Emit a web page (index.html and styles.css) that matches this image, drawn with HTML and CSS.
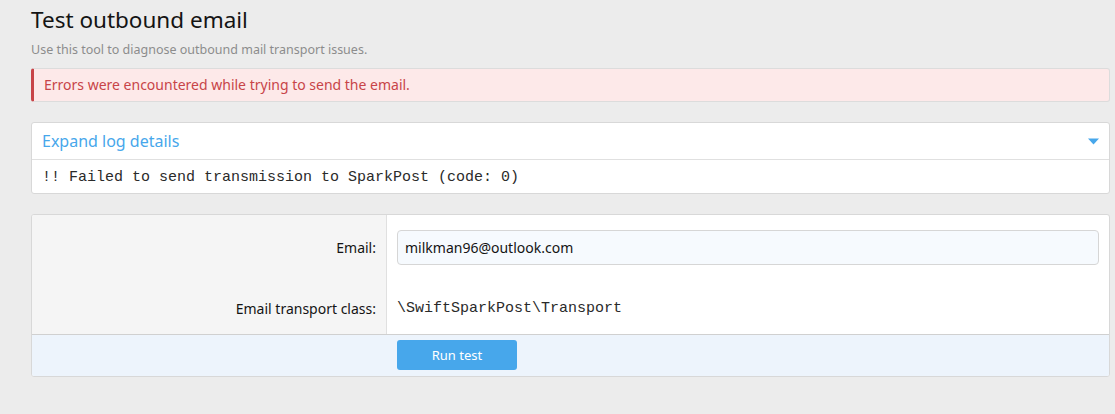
FILE: index.html
```html
<!DOCTYPE html>
<html>
<head>
	<meta charset="UTF-8">
	<title>Test outbound email</title>
	<link rel="stylesheet" href="styles.css">
</head>
<body>
	<div class="page">
		<h1 class="page-title">Test outbound email</h1>
		<p class="page-desc">Use this tool to diagnose outbound mail transport issues.</p>

		<div class="error-box">Errors were encountered while trying to send the email.</div>

		<div class="block log-block">
			<div class="log-head">
				<span class="log-title">Expand log details</span>
				<svg class="caret" width="11" height="7" viewBox="0 0 11 7"><path d="M0 0.5 H11 L5.5 6.5 Z" fill="#47a7eb"/></svg>
			</div>
			<div class="log-body">!! Failed to send transmission to SparkPost (code: 0)</div>
		</div>

		<div class="block form-block">
			<div class="form-row">
				<div class="form-label">Email:</div>
				<div class="form-value">
					<input class="text-input" type="text" value="milkman96@outlook.com">
				</div>
			</div>
			<div class="form-row">
				<div class="form-label row-last">Email transport class:</div>
				<div class="form-value row-last mono">\SwiftSparkPost\Transport</div>
			</div>
			<div class="form-footer">
				<div class="footer-spacer"></div>
				<div class="footer-main">
					<button type="button" class="btn">Run test</button>
				</div>
			</div>
		</div>
	</div>
</body>
</html>
```

FILE: styles.css
```css
html, body{
	margin: 0;
	padding: 0;
	background: #ececec;
	font-family: "Noto Sans", "Open Sans", sans-serif;
	color: #141414;
}
.page{
	padding: 4px 5px 0 31px;
}
.page-title{
	margin: 0;
	font-size: 22.5px;
	font-weight: 400;
	line-height: 32px;
}
.page-desc{
	margin: 5px 0 0 0;
	font-size: 12.5px;
	color: #8c8c8c;
	line-height: 18px;
}
.error-box{
	margin-top: 9px;
	background: #fde9e9;
	border: 1px solid #dcdcdc;
	border-left: 3px solid #c84448;
	border-radius: 3px;
	color: #c84448;
	font-size: 14px;
	padding: 7px 10px;
	line-height: 18px;
}
.block{
	background: #fff;
	border: 1px solid #d8d8d8;
	border-radius: 3px;
}
.log-block{
	margin-top: 20px;
}
.log-head{
	display: flex;
	align-items: center;
	justify-content: space-between;
	padding: 0 10px;
	height: 36px;
	border-bottom: 1px solid #e0e0e0;
}
.log-title{
	color: #47a7eb;
	font-size: 16px;
}
.log-body{
	font-family: "Liberation Mono", monospace;
	font-size: 15px;
	padding: 10px 10px 7px;
	line-height: 16px;
	color: #2a2a2a;
}
.form-block{
	margin-top: 20px;
	overflow: hidden;
}
.form-row{
	display: flex;
}
.form-label{
	width: 344px;
	flex-shrink: 0;
	background: #f5f5f5;
	border-right: 1px solid #e0e0e0;
	text-align: right;
	padding: 24px 10px 0 0;
	font-size: 14px;
	height: 26px;
	line-height: 18px;
}
.form-value{
	flex: 1;
	padding: 15px 10px 0 10px;
	height: 35px;
}
.text-input{
	box-sizing: border-box;
	width: 100%;
	height: 35px;
	border: 1px solid #d6d6d6;
	border-radius: 4px;
	background: #f6fafe;
	font-family: "Noto Sans", "Open Sans", sans-serif;
	font-size: 14px;
	padding: 0 7px;
	color: #141414;
	outline: none;
}
.row-last{
	height: 34px;
	padding-top: 35px;
	line-height: 18px;
}
.mono{
	font-family: "Liberation Mono", monospace;
	font-size: 15px;
	color: #2a2a2a;
}
.form-footer{
	display: flex;
	background: #edf4fc;
	border-top: 1px solid #d0d0d0;
	height: 41px;
}
.footer-spacer{
	width: 355px;
}
.footer-main{
	padding: 5px 10px;
}
.btn{
	width: 120px;
	height: 30px;
	border: none;
	border-radius: 3px;
	background: #47a7eb;
	color: #fff;
	font-family: "Noto Sans", "Open Sans", sans-serif;
	font-size: 13px;
}
```
